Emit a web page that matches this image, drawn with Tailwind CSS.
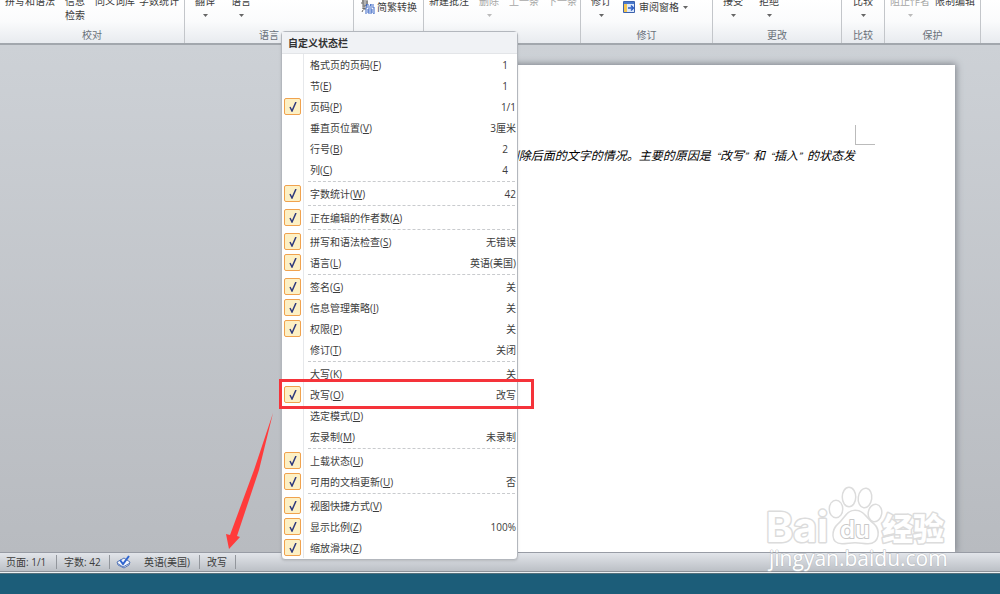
<!DOCTYPE html>
<html lang="zh-CN">
  <head>
    <meta charset="UTF-8" />
    <meta name="viewport" content="width=device-width, initial-scale=1.0" />
    <script src="https://cdn.jsdelivr.net/npm/@tailwindcss/browser@4"></script>
    <title>自定义状态栏</title>
  </head>

  <body
    class="relative flex flex-col h-screen overflow-hidden bg-[#1c5d79] font-['Open_Sans','Noto_Sans_CJK_SC',sans-serif] text-[10px] leading-[14px] text-[#3c3c3c]"
  >
    <!-- Ribbon -->
    <header
      class="flex shrink-0 h-[45px] overflow-hidden bg-linear-to-b from-white via-[#fafbfc] to-[#e8ebef] border-b-2 border-[#a2a7ad]"
    >
      <section class="flex flex-col shrink-0 w-[185px] border-r border-[#c3c6ca]">
        <div class="flex -mt-1.5 h-7 pl-[5px] items-start">
          <button class="whitespace-nowrap">拼写和语法</button>
          <button class="ml-2.5 w-5">信息检索</button>
          <button class="ml-2.5 whitespace-nowrap">同义词库</button>
          <button class="ml-1 whitespace-nowrap">字数统计</button>
        </div>
        <h2 class="pt-1.5 text-center text-[#697079]">校对</h2>
      </section>
      <section class="flex flex-col shrink-0 w-[169px] border-r border-[#c3c6ca]">
        <div class="flex -mt-1.5 h-7 pl-2.5 gap-4 items-start">
          <button class="flex flex-col items-center">
            翻译
            <svg class="mt-1.5 w-[5px] h-[3px] fill-[#666]" viewBox="0 0 5 3"><path d="M0 0h5L2.5 3z" /></svg>
          </button>
          <button class="flex flex-col items-center">
            语言
            <svg class="mt-1.5 w-[5px] h-[3px] fill-[#666]" viewBox="0 0 5 3"><path d="M0 0h5L2.5 3z" /></svg>
          </button>
        </div>
        <h2 class="pt-1.5 text-center text-[#697079]">语言</h2>
      </section>
      <section class="flex flex-col shrink-0 w-[70px] border-r border-[#c3c6ca]">
        <button class="flex items-center h-3.5 pl-[7px] gap-0.5 whitespace-nowrap">
          <svg class="w-3.5 h-3.5" viewBox="0 0 14 14" fill="none">
            <path d="M1 1h6M0 3h7M2 0v5h4V1M1 6h5M3 6v4M1 8l4 1M2 10l-1 2" stroke="#666" />
            <path d="M6 4l-1 2M5 5h3M10 4l-1 2M9 5h4M5 7v7M5 7h8v7h-1M7 9h4v4H7zM7 11h4" stroke="#3a67c5" />
          </svg>
          简繁转换
        </button>
      </section>
      <section class="flex flex-col shrink-0 w-[157px] border-r border-[#c3c6ca]">
        <div class="flex -mt-1.5 h-7 pl-[5px] items-start whitespace-nowrap text-[#a6a6a6]">
          <button class="text-[#3c3c3c]">新建批注</button>
          <button class="ml-2.5 flex flex-col items-center">
            删除
            <svg class="mt-1.5 w-[5px] h-[3px] fill-[#bbb]" viewBox="0 0 5 3"><path d="M0 0h5L2.5 3z" /></svg>
          </button>
          <button class="ml-2.5">上一条</button>
          <button class="ml-2">下一条</button>
        </div>
      </section>
      <section class="flex flex-col shrink-0 w-[132px] border-r border-[#c3c6ca]">
        <div class="flex -mt-1.5 h-7 pl-2.5 items-start">
          <button class="flex flex-col items-center">
            修订
            <svg class="mt-1.5 w-[5px] h-[3px] fill-[#666]" viewBox="0 0 5 3"><path d="M0 0h5L2.5 3z" /></svg>
          </button>
          <button class="ml-3 mt-1.5 flex items-center gap-1 whitespace-nowrap">
            <svg class="w-3 h-3.5" viewBox="0 0 12 14" fill="none">
              <path d="M.5 1.5h11v11H.5z" fill="#dbe8fb" stroke="#3c62ad" />
              <path d="M1 2h10v2H1z" fill="#4878cc" />
              <path d="M1 4h3v8H1z" fill="#f4c652" />
              <path d="M5 8h5M8 5.500l2.500 2.500L8 10.500" stroke="#2f5fc4" stroke-width="1.500" />
            </svg>
            审阅窗格
            <svg class="w-[5px] h-[3px] fill-[#666]" viewBox="0 0 5 3"><path d="M0 0h5L2.5 3z" /></svg>
          </button>
        </div>
        <h2 class="pt-1.5 text-center text-[#697079]">修订</h2>
      </section>
      <section class="flex flex-col shrink-0 w-[129px] border-r border-[#c3c6ca]">
        <div class="flex -mt-1.5 h-7 pl-2.5 gap-4 items-start">
          <button class="flex flex-col items-center">
            接受
            <svg class="mt-1.5 w-[5px] h-[3px] fill-[#666]" viewBox="0 0 5 3"><path d="M0 0h5L2.5 3z" /></svg>
          </button>
          <button class="flex flex-col items-center">
            拒绝
            <svg class="mt-1.5 w-[5px] h-[3px] fill-[#666]" viewBox="0 0 5 3"><path d="M0 0h5L2.5 3z" /></svg>
          </button>
        </div>
        <h2 class="pt-1.5 text-center text-[#697079]">更改</h2>
      </section>
      <section class="flex flex-col shrink-0 w-[43px] border-r border-[#c3c6ca]">
        <div class="flex -mt-1.5 h-7 justify-center items-start">
          <button class="flex flex-col items-center">
            比较
            <svg class="mt-1.5 w-[5px] h-[3px] fill-[#666]" viewBox="0 0 5 3"><path d="M0 0h5L2.5 3z" /></svg>
          </button>
        </div>
        <h2 class="pt-1.5 text-center text-[#697079]">比较</h2>
      </section>
      <section class="flex flex-col shrink-0 w-24 border-r border-[#c3c6ca]">
        <div class="flex -mt-1.5 h-7 pl-[5px] gap-[5px] items-start whitespace-nowrap">
          <button class="flex flex-col items-center text-[#a6a6a6]">
            阻止作者
            <svg class="mt-1.5 w-[5px] h-[3px] fill-[#bbb]" viewBox="0 0 5 3"><path d="M0 0h5L2.5 3z" /></svg>
          </button>
          <button>限制编辑</button>
        </div>
        <h2 class="pt-1.5 text-center text-[#697079]">保护</h2>
      </section>
    </header>

    <!-- Document -->
    <main class="flex flex-1 min-h-0 justify-end overflow-hidden pt-5 pr-[45px] bg-linear-to-b from-[#cdd1d6] to-[#b8bbc0]">
      <article class="w-3/5 pt-[60px] pr-20 bg-white shadow-[0_0_7px_1px_#7d828a]">
        <div class="ml-auto w-5 h-5 border-l border-b border-[#bbb]"></div>
        <p class="pr-5 text-right font-['Noto_Sans_CJK_SC',sans-serif] text-[12px] leading-5 italic whitespace-nowrap text-black">
          删除后面的文字的情况。主要的原因是<span class="text-[9px]">“</span>改写<span class="text-[9px]">”</span>和<span class="text-[9px]">“</span>插入<span class="text-[9px]">”</span>的状态发
        </p>
      </article>
    </main>

    <!-- Status bar -->
    <footer
      class="flex shrink-0 items-center h-[19px] pb-px pl-1.5 bg-linear-to-b from-[#e2e5ea] to-[#bcc0c6] border-t border-[#989ca5] whitespace-nowrap"
    >
      <span class="w-[51px] border-r border-[#92969c]">页面: 1/1</span>
      <span class="w-[53px] pl-[7px] border-r border-[#92969c]">字数: 42</span>
      <svg class="ml-1.5 w-4 h-3.5" viewBox="0 0 16 14">
        <path d="M1 7l7-4 6 4-1 3-5 3-6-3z" fill="#f3f6fc" stroke="#5878b8" />
        <path d="M1 8l6 4 7-4" fill="none" stroke="#5878b8" />
        <path d="M4 5l3 4 6-8" fill="none" stroke="#2f65cf" stroke-width="2" />
      </svg>
      <span class="ml-3 w-14 border-r border-[#92969c]">英语(美国)</span>
      <span class="w-9 pl-[7px] border-r border-[#92969c]">改写</span>
    </footer>
    <div class="shrink-0 h-[3px] bg-[#eef1f3] border-t border-b border-t-[#8d9299] border-b-[#54707c]"></div>
    <div class="shrink-0 h-5"></div>

    <!-- Watermark -->
    <svg class="absolute right-10 bottom-[14px] w-[200px] h-[100px]" viewBox="0 0 200 100">
      <g fill="#fff" stroke="#dcdcdc" stroke-width="3" paint-order="stroke" stroke-linejoin="round">
        <text x="6" y="62" font-family="Inter" font-weight="700" font-size="41">Bai</text>
        <ellipse cx="76" cy="29" rx="6" ry="8" />
        <ellipse cx="89" cy="17" rx="6" ry="9" />
        <ellipse cx="105" cy="18" rx="6" ry="9" transform="rotate(8 105 18)" />
        <ellipse cx="115" cy="33" rx="6" ry="8" transform="rotate(10 115 33)" />
        <path d="M95 31c-8 0-10 8-16 13-7 6-8 19 3 19 5 0 8-1 13-1s8 1 13 1c11 0 12-13 5-19-7-5-9-13-18-13z" />
        <text x="80" y="58" font-family="Inter" font-weight="600" font-size="24" stroke="#c8c8c8" stroke-width="2">du</text>
        <text x="122" y="60" font-family="Noto Sans CJK SC" font-weight="900" font-size="31">经验</text>
      </g>
      <text x="9" y="86" font-family="Open Sans" font-size="21" fill="#fff" stroke="#b9bdc2" stroke-width="1" paint-order="stroke">jingyan.baidu.com</text>
    </svg>

    <!-- Context menu -->
    <div class="absolute left-[281px] top-[31px] w-[237px] pb-px bg-white border border-[#b3b7bd] rounded-sm shadow-sm">
      <h1 class="h-[22px] pl-1.5 leading-[22px] font-semibold bg-[#f0f2f5] border-b border-[#e3e5e8] text-[#333]">
        自定义状态栏
      </h1>
      <div id="menu"></div>
    </div>

    <!-- Callout box and arrow -->
    <div class="absolute left-[279px] top-[379px] w-[255px] h-[30px] border-[3px] border-[#f5333a]"></div>
    <svg class="absolute left-[220px] top-[410px] w-[60px] h-[140px]" viewBox="0 0 60 140">
      <path d="M53 3L39 60 17 126l3 1-11 12-3-15 4 1L34 60z" fill="#ff3b3b" />
    </svg>

    <script>
      // [label, key, value, checked], null is a separator
      const items = [
        ["格式页的页码", "F", "1", false],
        ["节", "E", "1", false],
        ["页码", "P", "1/1", true],
        ["垂直页位置", "V", "3厘米", false],
        ["行号", "B", "2", false],
        ["列", "C", "4", false],
        null,
        ["字数统计", "W", "42", true],
        null,
        ["正在编辑的作者数", "A", "", true],
        null,
        ["拼写和语法检查", "S", "无错误", true],
        ["语言", "L", "英语(美国)", true],
        null,
        ["签名", "G", "关", true],
        ["信息管理策略", "I", "关", true],
        ["权限", "P", "关", true],
        ["修订", "T", "关闭", false],
        null,
        ["大写", "K", "关", false],
        ["改写", "O", "改写", true],
        ["选定模式", "D", "", false],
        ["宏录制", "M", "未录制", false],
        null,
        ["上载状态", "U", "", true],
        ["可用的文档更新", "U", "否", true],
        null,
        ["视图快捷方式", "V", "", true],
        ["显示比例", "Z", "100%", true],
        ["缩放滑块", "Z", "", true],
      ];

      document.getElementById("menu").innerHTML = items
        .map((item) => {
          if (!item) {
            return `<div class="flex h-[3px]"><div class="w-[22px] border-r border-[#e6e8eb]"></div><div class="flex-1 ml-1 mr-0.5 mt-px border-t border-dashed border-[#c9cbce]"></div></div>`;
          }
          const [label, key, value, checked] = item;
          return `
            <label class="flex items-center h-[21px] pr-px">
              <span class="grid place-items-center w-[22px] h-full border-r border-[#e6e8eb]">
                <input type="checkbox" ${checked ? "checked" : ""} class="peer col-start-1 row-start-1 appearance-none w-[17px] h-[17px] rounded-xs checked:bg-[#fdf0c4] checked:border checked:border-[#f0a24e]" />
                <svg class="col-start-1 row-start-1 hidden peer-checked:block pointer-events-none w-2.5 h-2.5" viewBox="0 0 10 10">
                  <path d="M2 5l2 4L8 0" fill="none" stroke="#2f3a7d" stroke-width="1.500" />
                </svg>
              </span>
              <span class="ml-[6px] flex-1">${label}(<u>${key}</u>)</span>
              <span class="${value.length === 1 && value < "9" ? "pr-2" : ""}">${value}</span>
            </label>`;
        })
        .join("");
    </script>
  </body>
</html>
